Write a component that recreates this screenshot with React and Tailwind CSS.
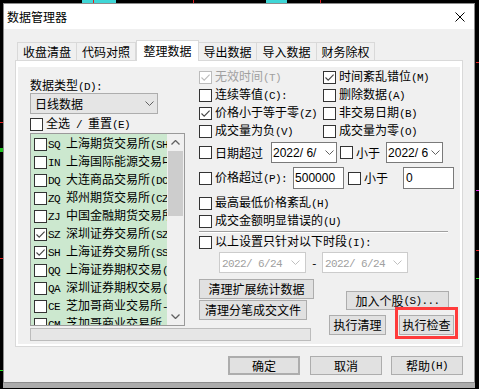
import React from 'react';

// ascii runs get a narrow mono face, like SimSun's half-width glyphs
const Txt = ({ s }) =>
  s
    .split(/([\x20-\x7e]+)/)
    .filter(Boolean)
    .map((p, i) =>
      /^[\x20-\x7e]+$/.test(p) ? (
        <span key={i} className="font-['Liberation_Mono',monospace] text-[11px] tracking-[-0.6px]">
          {p}
        </span>
      ) : (
        <span key={i}>{p}</span>
      )
    );

const Check = ({ checked, disabled }) => (
  <span
    className={`w-[13px] h-[13px] shrink-0 border bg-white flex items-center justify-center ${
      disabled ? 'border-[#bcbcbc]' : 'border-[#333333]'
    }`}
  >
    {checked && (
      <svg width="11" height="11" viewBox="0 0 11 11">
        <path d="M1.5 5.5 L4.2 8.2 L9.6 2.6" fill="none" stroke={disabled ? '#bcbcbc' : '#444'} strokeWidth="1.1" />
      </svg>
    )}
  </span>
);

const Chevron = ({ color = '#606060' }) => (
  <svg width="9" height="5" viewBox="0 0 9 5">
    <path d="M0.5 0.5 L4.5 4.5 L8.5 0.5" fill="none" stroke={color} strokeWidth="1" />
  </svg>
);

const Opt = ({ label, checked, disabled, className = '' }) => (
  <div className={`flex items-center h-[18px] whitespace-pre ${className}`}>
    <Check checked={checked} disabled={disabled} />
    <span className={`ml-[3px] ${disabled ? 'text-[#a0a0a0]' : ''}`}>
      <Txt s={label} />
    </span>
  </div>
);

const DatePick = ({ w, text }) => (
  <div className={`${w} h-full bg-white border border-[#7a7a7a] flex items-center overflow-hidden`}>
    <span className="flex-1 pl-[1px] font-['Liberation_Sans',sans-serif] text-[12px] whitespace-pre overflow-hidden">{text}</span>
    <span className="w-[14px] flex justify-center shrink-0">
      <Chevron />
    </span>
  </div>
);

const DisabledPick = ({ w }) => (
  <div className={`${w} h-full bg-white border border-[#cccccc] flex items-center text-[#a0a0a0]`}>
    <span className="flex-1 pl-[2px] whitespace-pre">
      <Txt s="2022/ 6/24" />
    </span>
    <span className="w-[20px] flex justify-center">
      <Chevron color="#c0c0c0" />
    </span>
  </div>
);

const Btn = ({ children, className = '' }) => (
  <div className={`bg-[#e1e1e1] border border-[#adadad] flex items-center justify-center whitespace-pre ${className}`}>
    {children}
  </div>
);

const tabs = [
  { t: '收盘清盘', w: 'w-[60px]' },
  { t: '代码对照', w: 'w-[59px]' },
  { t: '整理数据', w: 'w-[63px]', on: true },
  { t: '导出数据', w: 'w-[58px]' },
  { t: '导入数据', w: 'w-[60px]' },
  { t: '财务除权', w: 'w-[58px]' },
];

const markets = [
  ['SQ', '上海期货交易所(SHFE)'],
  ['IN', '上海国际能源交易中心'],
  ['DQ', '大连商品交易所(DCE)'],
  ['ZQ', '郑州期货交易所(CZCE)'],
  ['ZJ', '中国金融期货交易所'],
  ['SZ', '深圳证券交易所(SZSE)', true],
  ['SH', '上海证券交易所(SSE)', true],
  ['QQ', '上海证券期权交易(SHO)'],
  ['QA', '深圳证券期权交易(SZO)'],
  ['CE', '芝加哥商业交易所-CME'],
  ['CM', '芝加哥商业交易所-COMEX'],
];

export default function App() {
  return (
    <div className="relative w-[479px] h-[389px] bg-black overflow-hidden pt-[3px] pl-[3px] font-['Noto_Sans_CJK_SC',sans-serif] text-[12px] leading-[14px] text-black">
      {/* chart behind the dialog */}
      <div className="absolute left-[82px] top-0 w-[34px] h-[3px] bg-[#3fd6d6]" />
      <div className="absolute left-[266px] top-0 w-[21px] h-[3px] bg-[#3fd6d6]" />
      <div className="absolute left-[93px] top-0 w-[1px] h-[3px] bg-[#e02020]" />
      <div className="absolute left-[193px] top-0 w-[1px] h-[3px] bg-[#e02020]" />
      <div className="absolute left-[320px] top-0 w-[1px] h-[3px] bg-[#e02020]" />
      <div className="absolute left-[0px] top-[122px] w-[3px] h-[1px] bg-[#e02020]" />
      <div className="absolute left-[0px] top-[148px] w-[3px] h-[4px] bg-[#20c020]" />
      <div className="absolute left-[0px] top-[258px] w-[3px] h-[1px] bg-[#e02020]" />
      <div className="absolute left-[0px] top-[370px] w-[3px] h-[1px] bg-[#20e020]" />
      <div className="absolute left-[476px] top-[62px] w-[3px] h-[1px] bg-[#e02020]" />
      <div className="absolute left-[476px] top-[190px] w-[3px] h-[1px] bg-[#e020e0]" />
      <div className="absolute left-[476px] top-[250px] w-[3px] h-[1px] bg-[#e02020]" />
      <div className="absolute left-[476px] top-[278px] w-[3px] h-[1px] bg-[#20e020]" />

      <div className="relative w-[472px] h-[380px] border border-[#8c8c8c] bg-[#f0f0f0] flex flex-col shadow-[0_5px_0_0_#ababab]">
        {/* Title bar */}
        <div className="h-[25px] bg-white flex items-center justify-between pl-[3px] pr-[9px]">
          <span>数据管理器</span>
          <svg width="10" height="10" viewBox="0 0 10 10">
            <path d="M0.5 0.5 L9.5 9.5 M9.5 0.5 L0.5 9.5" stroke="#000" strokeWidth="1" />
          </svg>
        </div>

        {/* Tabs */}
        <div className="mt-[11px] h-[20px] flex items-end pl-[13px]">
          {tabs.map((tab, i) =>
            tab.on ? (
              <div
                key={i}
                className={`${tab.w} h-[21px] -mb-[1px] relative z-10 bg-white border border-b-0 border-[#d9d9d9] flex items-center justify-center pb-[1px]`}
              >
                {tab.t}
              </div>
            ) : (
              <div
                key={i}
                className={`${tab.w} h-[18px] bg-[#f0f0f0] border-t border-r border-[#d9d9d9] flex items-center justify-center ${
                  i === 0 ? 'border-l' : ''
                }`}
              >
                {tab.t}
              </div>
            )
          )}
        </div>

        {/* Tab panel */}
        <div className="ml-[11px] w-[448px] h-[287px] border border-[#d9d9d9] bg-white flex">
          <div className="mt-[6px] mx-[2px] mb-[2px] flex-1 bg-[#f0f0f0] flex pl-[12px]">
            {/* left column */}
            <div className="w-[155px] shrink-0 flex flex-col">
              <div className="mt-[11px] h-[14px] whitespace-pre">
                <Txt s="数据类型(D):" />
              </div>
              <div className="mt-[1px] h-[21px] w-[128px] bg-[#e5e5e5] border border-[#adadad] flex items-center">
                <span className="flex-1 pl-[4px]">日线数据</span>
                <span className="w-[16px] flex justify-center">
                  <Chevron />
                </span>
              </div>
              <Opt label="全选 / 重置(E)" className="mt-[1px] h-[13px]" />
              <div className="h-[193px] border border-[#9a9a9a] bg-[#cce8cf] flex">
                <div className="flex-1 overflow-hidden pt-[1px]">
                  {markets.map(([code, name, on]) => (
                    <div key={code} className="h-[18px] flex items-center pl-[3px] whitespace-pre">
                      <Check checked={on} />
                      <span className="ml-[1px]">
                        <Txt s={code + ' ' + name} />
                      </span>
                    </div>
                  ))}
                </div>
                <div className="w-[17px] bg-[#f0f0f0] flex flex-col">
                  <div className="h-[17px] flex items-center justify-center">
                    <svg width="9" height="5" viewBox="0 0 9 5">
                      <path d="M0.5 4.5 L4.5 0.5 L8.5 4.5" fill="none" stroke="#606060" strokeWidth="1.3" />
                    </svg>
                  </div>
                  <div className="h-[65px] mx-[1px] bg-[#cdcdcd]" />
                  <div className="flex-1" />
                  <div className="h-[17px] flex items-center justify-center">
                    <svg width="9" height="5" viewBox="0 0 9 5">
                      <path d="M0.5 0.5 L4.5 4.5 L8.5 0.5" fill="none" stroke="#606060" strokeWidth="1.3" />
                    </svg>
                  </div>
                </div>
              </div>
              <div className="mt-[2px] h-[13px] w-[281px] shrink-0 bg-[#e6e6e6] border border-[#bcbcbc]" />
            </div>

            {/* right column */}
            <div className="ml-[14px] flex-1 flex flex-col">
              <div className="mt-[1px] grid grid-cols-[124px_1fr]">
                <Opt label="无效时间(T)" checked disabled />
                <Opt label="时间紊乱错位(M)" checked />
                <Opt label="连续等值(C):" />
                <Opt label="删除数据(A)" />
                <Opt label="价格小于等于零(Z)" checked />
                <Opt label="非交易日期(B)" />
                <Opt label="成交量为负(V)" />
                <Opt label="成交量为零(O)" />
              </div>

              <div className="mt-[2px] h-[21px] flex items-center">
                <Opt label="日期超过" />
                <div className="ml-[8px] h-full">
                  <DatePick w="w-[66px]" text="2022/ 6/" />
                </div>
                <Opt label="小于" className="ml-[3px]" />
                <div className="ml-[6px] h-full">
                  <DatePick w="w-[57px]" text="2022/ 6/" />
                </div>
              </div>

              <div className="mt-[4px] h-[22px] flex items-center">
                <Opt label="价格超过(P):" />
                <div className="ml-[6px] w-[51px] h-full bg-white border border-[#7a7a7a] flex items-center pl-[1px] font-['Liberation_Sans',sans-serif] text-[12px]">
                  500000
                </div>
                <Opt label="小于" className="ml-[4px]" />
                <div className="ml-[15px] w-[51px] h-full bg-white border border-[#7a7a7a] flex items-center pl-[2px] font-['Liberation_Sans',sans-serif] text-[12px]">
                  0
                </div>
              </div>

              <Opt label="最高最低价格紊乱(H)" className="mt-[5px]" />
              <Opt label="成交金额明显错误的(U)" />
              <div className="mt-[1px] w-[249px] h-[2px] border-t border-[#a0a0a0] border-b border-b-white" />
              <Opt label="以上设置只针对以下时段(I):" />
              <div className="mt-[1px] h-[21px] flex items-center ml-[20px]">
                <DisabledPick w="w-[87px]" />
                <span className="w-[16px] text-center">
                  <Txt s="-" />
                </span>
                <DisabledPick w="w-[86px]" />
              </div>

              <div className="mt-[6px] flex">
                <div className="w-[115px] flex flex-col">
                  <Btn className="h-[20px] w-[115px]">清理扩展统计数据</Btn>
                  <Btn className="mt-[1px] h-[20px] w-[108px]">清理分笔成交文件</Btn>
                </div>
                <div className="ml-[15px] flex flex-col">
                  <Btn className="mt-[12px] ml-[17px] h-[19px] w-[103px]">
                    <Txt s="加入个股(S)..." />
                  </Btn>
                  <div className="mt-[5px] flex">
                    <Btn className="h-[20px] w-[57px]">执行清理</Btn>
                    <div className="relative ml-[13px]">
                      <Btn className="h-[20px] w-[55px]">执行检查</Btn>
                      <div className="absolute -left-[4px] -right-[4px] -top-[8px] -bottom-[4px] border-[3px] border-[#ff3b3b]" />
                    </div>
                  </div>
                </div>
              </div>
            </div>
          </div>
        </div>

        {/* Dialog buttons */}
        <div className="mt-[9px] flex justify-end pr-[11px]">
          <Btn className="h-[19px] w-[72px] border-2 border-[#0078d7]">确定</Btn>
          <Btn className="ml-[10px] h-[19px] w-[72px]">取消</Btn>
          <Btn className="ml-[9px] h-[19px] w-[72px]">
            <Txt s="帮助(H)" />
          </Btn>
        </div>
      </div>
    </div>
  );
}
